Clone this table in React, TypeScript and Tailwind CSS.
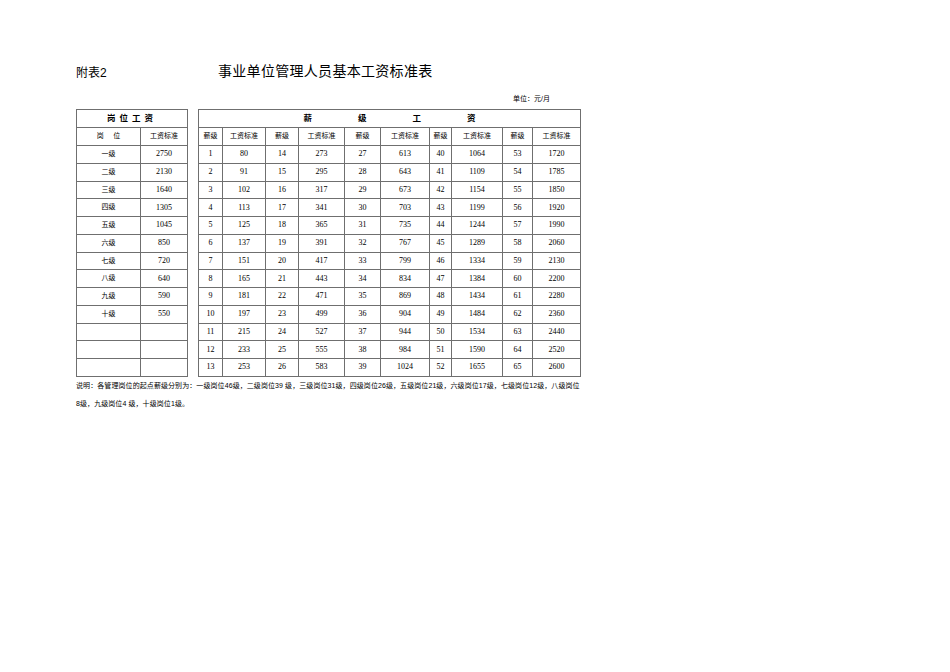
import React from "react";

const sans = '"Liberation Sans", "Noto Sans CJK SC", sans-serif';
const serif = '"Liberation Serif", "Noto Sans CJK SC", serif';

const posts: [string, string][] = [
  ["一级", "2750"],
  ["二级", "2130"],
  ["三级", "1640"],
  ["四级", "1305"],
  ["五级", "1045"],
  ["六级", "850"],
  ["七级", "720"],
  ["八级", "640"],
  ["九级", "590"],
  ["十级", "550"],
  ["", ""],
  ["", ""],
  ["", ""],
];

const groups: number[][] = [
  [80, 91, 102, 113, 125, 137, 151, 165, 181, 197, 215, 233, 253],
  [273, 295, 317, 341, 365, 391, 417, 443, 471, 499, 527, 555, 583],
  [613, 643, 673, 703, 735, 767, 799, 834, 869, 904, 944, 984, 1024],
  [1064, 1109, 1154, 1199, 1244, 1289, 1334, 1384, 1434, 1484, 1534, 1590, 1655],
  [1720, 1785, 1850, 1920, 1990, 2060, 2130, 2200, 2280, 2360, 2440, 2520, 2600],
];

const rightCols = [24, 43, 33, 46, 36, 49, 22, 51, 30, 48];

const cell = "border border-[#6f6f6f] text-center align-middle p-0";

export default function App() {
  return (
    <div className="w-[950px] h-[672px] bg-white text-black" style={{ fontFamily: sans }}>
      <div className="pt-[62px] pl-[76px]">
        <div className="flex items-end h-[18px]">
          <div className="w-[142px] text-[12px] leading-[14px]">附表2</div>
          <div className="text-[14px] leading-[18px] tracking-[0.3px]">事业单位管理人员基本工资标准表</div>
        </div>

        <div className="w-[474px] mt-[14px] text-right text-[7px] leading-[10px]">单位：元/月</div>

        <div className="flex gap-[10px] mt-[5px]">
          <table className="border-collapse table-fixed w-[111px] border border-[#6f6f6f]">
            <colgroup>
              <col className="w-[64px]" />
              <col className="w-[47px]" />
            </colgroup>
            <tbody>
              <tr className="h-[18px]">
                <td colSpan={2} className={cell + " text-[8.5px] font-bold tracking-[4px]"}>岗位工资</td>
              </tr>
              <tr className="h-[18px] text-[7px]">
                <td className={cell}>岗&nbsp;&nbsp;&nbsp;&nbsp;&nbsp;位</td>
                <td className={cell}>工资标准</td>
              </tr>
              {posts.map(([n, v], i) => (
                <tr key={i} className="h-[17.75px]">
                  <td className={cell + " text-[7px]"}>{n}</td>
                  <td className={cell + " text-[8px]"} style={{ fontFamily: serif }}>{v}</td>
                </tr>
              ))}
            </tbody>
          </table>

          <table className="border-collapse table-fixed w-[382px] border border-[#6f6f6f]">
            <colgroup>
              {rightCols.map((w, i) => (
                <col key={i} style={{ width: w }} />
              ))}
            </colgroup>
            <tbody>
              <tr className="h-[18px]">
                <td colSpan={10} className={cell + " text-[8.5px] font-bold"}>
                  <div className="flex justify-center gap-[46px]">
                    <span>薪</span>
                    <span>级</span>
                    <span>工</span>
                    <span>资</span>
                  </div>
                </td>
              </tr>
              <tr className="h-[18px] text-[7px]">
                {groups.map((_, g) => (
                  <React.Fragment key={g}>
                    <td className={cell}>薪级</td>
                    <td className={cell}>工资标准</td>
                  </React.Fragment>
                ))}
              </tr>
              {Array.from({ length: 13 }).map((_, r) => (
                <tr key={r} className="h-[17.75px] text-[8px]" style={{ fontFamily: serif }}>
                  {groups.map((vals, g) => (
                    <React.Fragment key={g}>
                      <td className={cell}>{g * 13 + r + 1}</td>
                      <td className={cell}>{vals[r]}</td>
                    </React.Fragment>
                  ))}
                </tr>
              ))}
            </tbody>
          </table>
        </div>

        <div className="w-[510px] mt-[0px] text-[7px] leading-[18px] tracking-[0.08px] whitespace-nowrap">
          <div>说明：各管理岗位的起点薪级分别为：一级岗位46级，二级岗位39 级，三级岗位31级，四级岗位26级，五级岗位21级，六级岗位17级，七级岗位12级，八级岗位</div>
          <div>8级，九级岗位4 级，十级岗位1级。</div>
        </div>
      </div>
    </div>
  );
}
